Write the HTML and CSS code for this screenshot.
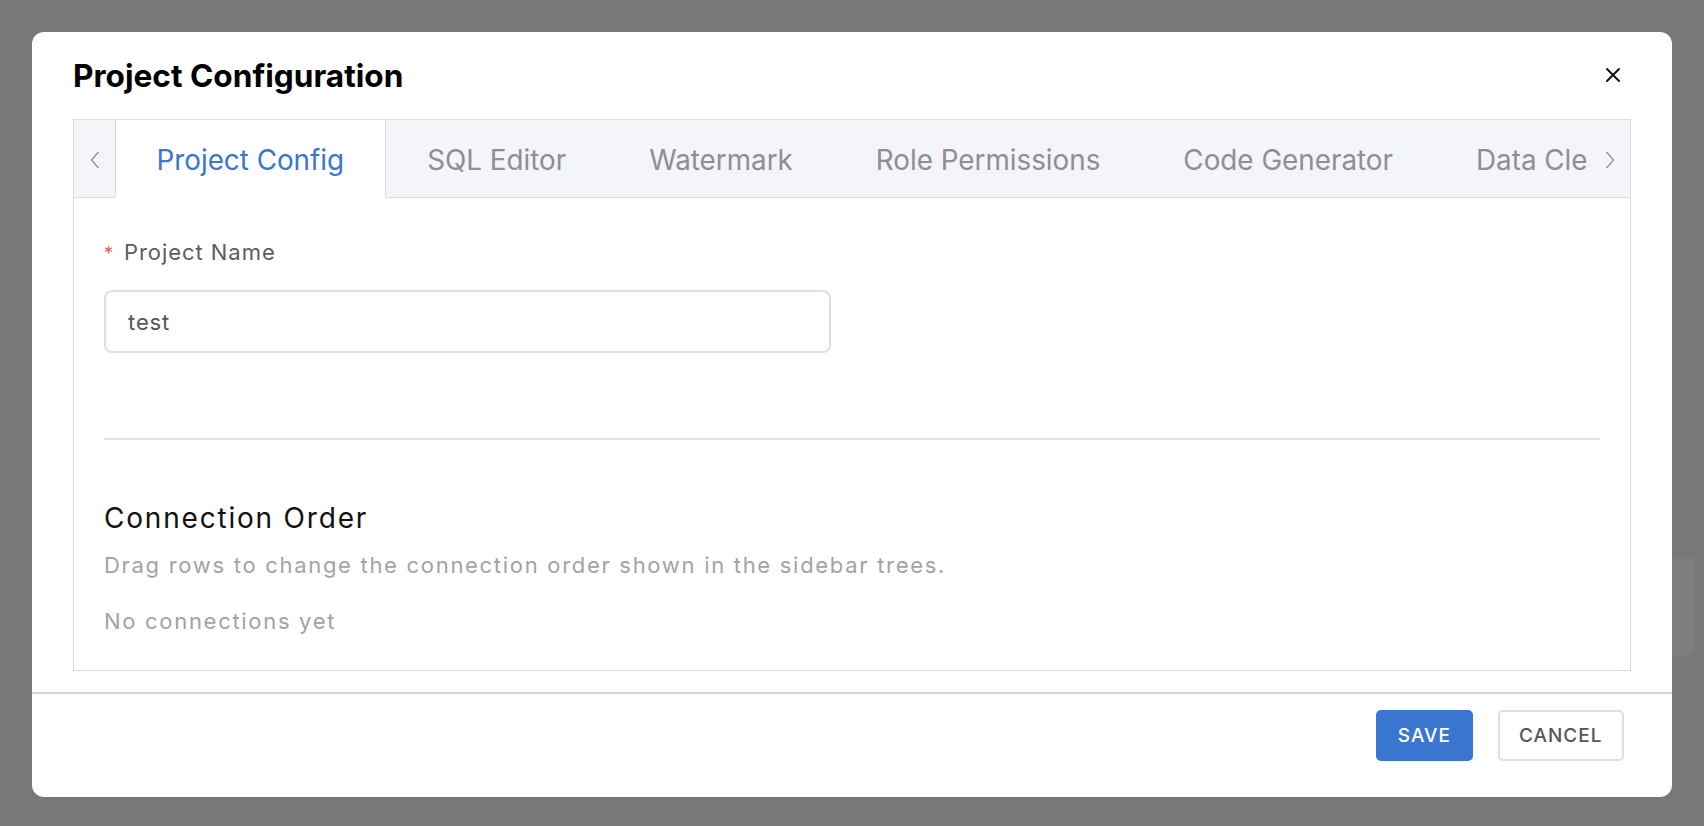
FILE: index.html
```html
<!DOCTYPE html>
<html lang="en">
<head>
    <meta charset="UTF-8">
    <meta name="viewport" content="width=device-width, initial-scale=1.0">
    <title>Project Configuration</title>
    <link rel="stylesheet" href="styles.css">
</head>
<body>
    <!-- page behind the dim layer -->
    <div class="page-card"></div>

    <div class="modal">
        <div class="modal-header">
            <h2 class="modal-title">Project Configuration</h2>
            <button class="close-btn" aria-label="Close">
                <svg width="16" height="16" viewBox="0 0 16 16"><path d="M2 2 L14 14 M14 2 L2 14" stroke="#111" stroke-width="2" stroke-linecap="round"/></svg>
            </button>
        </div>

        <div class="modal-body">
            <div class="tab-bar">
                <div class="tab-arrow">
                    <svg width="10" height="18" viewBox="0 0 10 18"><path d="M8.5 1 L1.5 9 L8.5 17" fill="none" stroke="#8e8e93" stroke-width="1.3"/></svg>
                </div>
                <div class="tab-list">
                    <div class="tab active">Project Config</div>
                    <div class="tab">SQL Editor</div>
                    <div class="tab">Watermark</div>
                    <div class="tab">Role Permissions</div>
                    <div class="tab">Code Generator</div>
                    <div class="tab">Data Cleanup</div>
                </div>
                <div class="tab-arrow">
                    <svg width="10" height="18" viewBox="0 0 10 18"><path d="M1.5 1 L8.5 9 L1.5 17" fill="none" stroke="#8e8e93" stroke-width="1.3"/></svg>
                </div>
            </div>

            <div class="tab-panel">
                <label class="field-label"><span class="required">*</span>Project Name</label>
                <input class="text-input" type="text" value="test">

                <hr class="divider">

                <h3 class="section-title">Connection Order</h3>
                <p class="hint">Drag rows to change the connection order shown in the sidebar trees.</p>
                <p class="empty">No connections yet</p>
            </div>
        </div>

        <div class="modal-footer">
            <button class="btn btn-primary">SAVE</button>
            <button class="btn">CANCEL</button>
        </div>
    </div>
</body>
</html>
```

FILE: styles.css
```css
body {
    font-family: 'Inter', 'Noto Sans', sans-serif;
    background-color: #77787a;
    margin: 0;
    padding: 32px 32px 0;
    height: 826px;
    box-sizing: border-box;
    overflow: hidden;
}

.page-card {
    position: absolute;
    left: 1660px;
    top: 557px;
    width: 35px;
    height: 99px;
    border-radius: 8px;
    background-color: #7d7e80;
}

.modal {
    position: relative;
    background-color: white;
    border-radius: 12px;
    width: 1640px;
    height: 765px;
    display: flex;
    flex-direction: column;
}

.modal-header {
    display: flex;
    justify-content: space-between;
    align-items: center;
    padding: 26px 51px 0 41px;
}

.modal-title {
    margin: 0;
    font-size: 31.6px;
    line-height: 36px;
    font-weight: 700;
    color: #000;
}

.close-btn {
    border: none;
    background: none;
    padding: 0;
    width: 16px;
    height: 16px;
    margin-top: -3px;
    cursor: pointer;
}

.close-btn svg {
    display: block;
}

.modal-body {
    padding: 25px 41px 21px;
}

.tab-bar {
    display: flex;
    height: 78px;
    border: 1px solid #dcdde4;
    border-bottom: none;
    background-color: #f4f5f9;
}

.tab-arrow {
    width: 41px;
    flex-shrink: 0;
    display: flex;
    align-items: center;
    justify-content: center;
    padding-top: 3px;
    border-bottom: 1px solid #dcdde4;
}

.tab-list {
    flex: 1;
    display: flex;
    overflow: hidden;
}

.tab {
    flex-shrink: 0;
    display: flex;
    align-items: center;
    padding: 2px 41.5px 0;
    font-size: 27.8px;
    color: #8e8e93;
    border-bottom: 1px solid #dcdde4;
}

.tab.active {
    background-color: white;
    color: #3a76cf;
    padding: 2px 40.5px 0;
    border-left: 1px solid #dcdde4;
    border-right: 1px solid #dcdde4;
    border-bottom-color: white;
}

.tab-panel {
    border: 1px solid #dcdde4;
    border-top: none;
    padding: 39px 30px 33px;
}

.field-label {
    display: block;
    font-size: 22px;
    line-height: 31px;
    color: #5c5c62;
    letter-spacing: 0.95px;
}

.required {
    color: #e25c5c;
    font-size: 18px;
    margin-right: 10px;
}

.text-input {
    display: block;
    margin-top: 21px;
    width: 727px;
    height: 63px;
    box-sizing: border-box;
    border: 2px solid #dedfe5;
    border-radius: 8px;
    padding: 0 22px;
    font-family: inherit;
    font-size: 22px;
    letter-spacing: 0.9px;
    color: #55555b;
    outline: none;
}

.divider {
    border: none;
    border-top: 2px solid #e2e3e8;
    margin: 85px 0 0;
}

.section-title {
    margin: 61px 0 0;
    font-size: 28px;
    line-height: 35px;
    font-weight: 400;
    color: #111;
    letter-spacing: 1.8px;
}

.hint {
    margin: 14px 0 0;
    font-size: 22px;
    line-height: 31px;
    color: #a2a2a7;
    letter-spacing: 1.7px;
}

.empty {
    margin: 25px 0 0;
    font-size: 22px;
    line-height: 31px;
    color: #a2a2a7;
    letter-spacing: 1.7px;
}

.modal-footer {
    display: flex;
    justify-content: flex-end;
    gap: 25px;
    padding: 16px 48px 36px;
    border-top: 2px solid #d4d6db;
}

.btn {
    height: 51px;
    padding: 0 19.5px;
    font-family: inherit;
    font-size: 19px;
    font-weight: 500;
    letter-spacing: 1px;
    color: #55555b;
    background-color: white;
    border: 2px solid #dedfe5;
    border-radius: 5px;
    cursor: pointer;
}

.btn-primary {
    background-color: #3a76cf;
    border-color: #3a76cf;
    color: white;
}
```
